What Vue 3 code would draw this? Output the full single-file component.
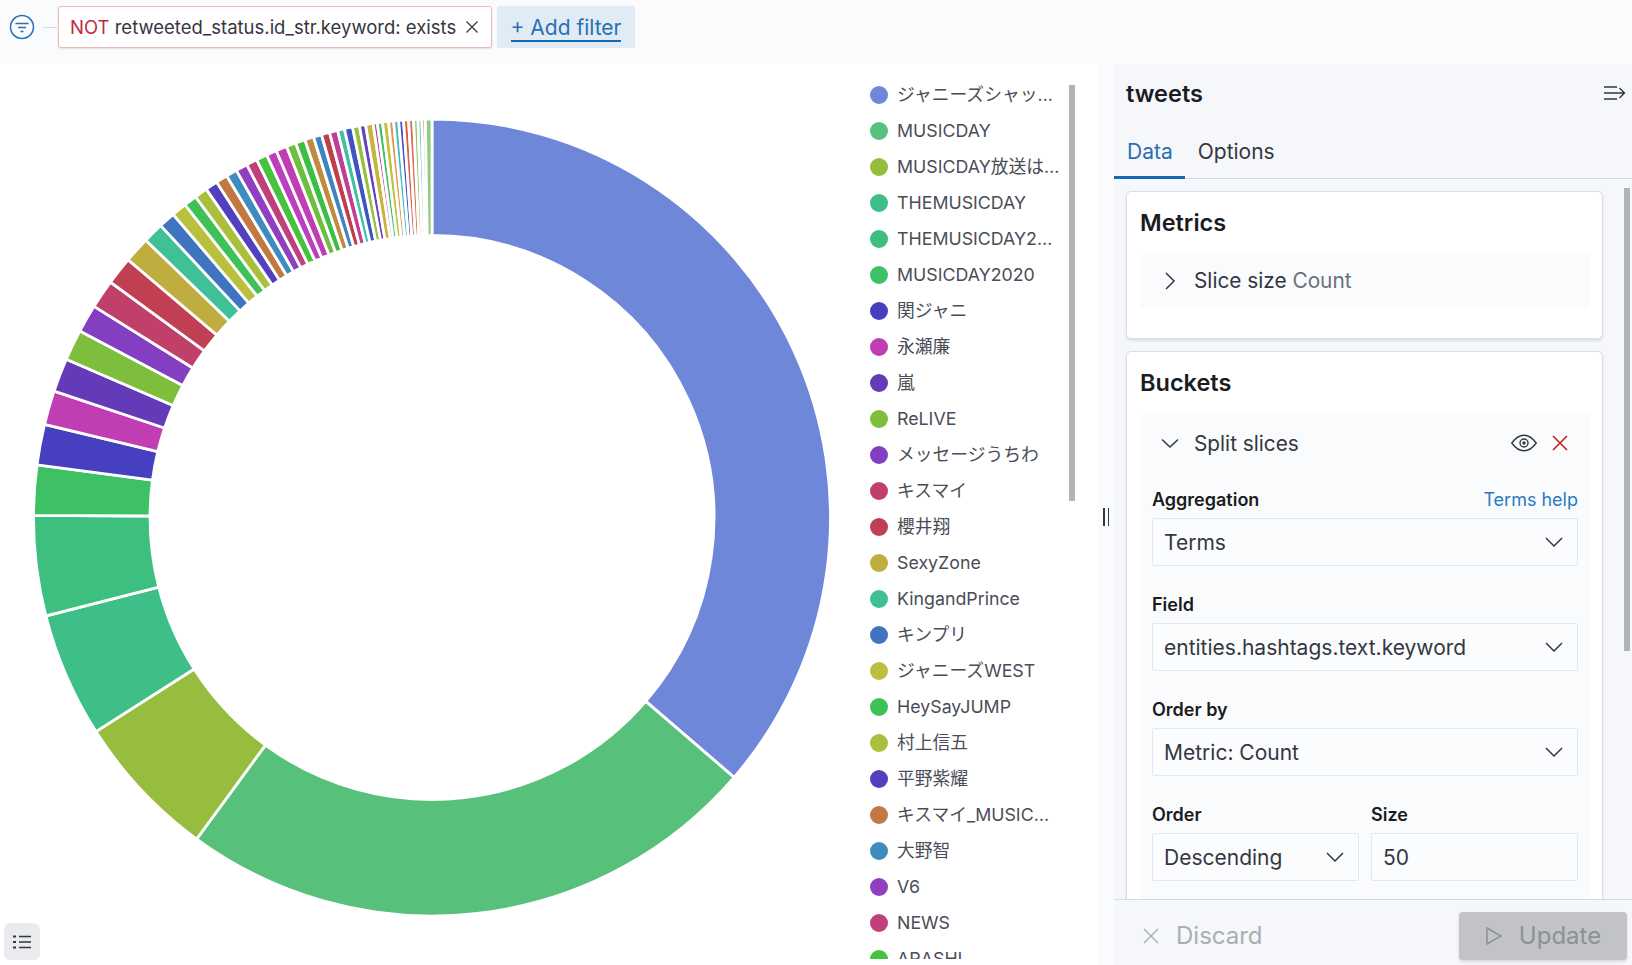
<template>
  <div class="page">
    <header class="filter-bar">
      <svg class="filter-icon" width="26" height="26" viewBox="0 0 26 26" fill="none" stroke="#2a6fb3" stroke-width="1.5">
        <circle cx="13" cy="13" r="11.5" />
        <path d="M6.5 9.5h13M9 13.5h8M11.5 17.5h3" />
      </svg>
      <span class="filter-dash"></span>
      <div class="filter-pill">
        <span class="not">NOT</span>&nbsp;retweeted_status.id_str.keyword: exists
        <svg class="pill-x" width="14" height="14" viewBox="0 0 14 14" fill="none" stroke="#343741" stroke-width="1.2">
          <path d="M1.5 1.5l11 11M12.5 1.5l-11 11" />
        </svg>
      </div>
      <div class="add-filter"><span>+ Add filter</span></div>
    </header>

    <main class="workspace">
      <section class="chart">
        <div class="pie-wrap">
          <svg class="pie" width="866" height="901" viewBox="0 0 866 901">
            <path
              v-for="s in slices"
              :key="s.start"
              :d="s.d"
              :fill="s.color"
              stroke="#fff"
              stroke-width="2.8"
            />
          </svg>
          <button class="legend-toggle">
            <svg width="20" height="18" viewBox="0 0 20 18" fill="none" stroke="#343741">
              <path d="M1 3.5h3M1 9h3M1 14.5h3" stroke-width="2" />
              <path d="M7 3.5h12M7 9h12M7 14.5h12" stroke-width="1.6" />
            </svg>
          </button>
        </div>
        <div class="legend">
          <ul class="legend-list">
            <li v-for="item in legend" :key="item.label" class="legend-item">
              <span class="dot" :style="{ background: item.color }"></span>
              <span class="legend-label">{{ item.label }}</span>
            </li>
          </ul>
          <div class="legend-thumb"></div>
        </div>
      </section>

      <div class="resizer"><span></span><span></span></div>

      <aside class="panel">
        <div class="panel-head">
          <h1>tweets</h1>
          <svg width="22" height="16" viewBox="0 0 22 16" fill="none" stroke="#343741" stroke-width="1.4">
            <path d="M0 2h13M0 8h20M0 14h13M15.5 3l5 5-5 5" />
          </svg>
        </div>
        <nav class="tabs">
          <div class="tab active">Data</div>
          <div class="tab">Options</div>
        </nav>

        <div class="panel-body">
          <section class="card metrics">
            <h2>Metrics</h2>
            <div class="accordion">
              <div class="acc-head">
                <svg class="chev" width="18" height="18" viewBox="0 0 18 18" fill="none" stroke="#343741" stroke-width="1.5">
                  <path d="M5 1l8 8-8 8" />
                </svg>
                <span>Slice size <em>Count</em></span>
              </div>
            </div>
          </section>

          <section class="card buckets">
            <h2>Buckets</h2>
            <div class="accordion open">
              <div class="acc-head">
                <svg class="chev" width="18" height="18" viewBox="0 0 18 18" fill="none" stroke="#343741" stroke-width="1.5">
                  <path d="M1 5.500L9 13l8-7.500" />
                </svg>
                <span>Split slices</span>
                <svg class="eye" width="26" height="18" viewBox="0 0 26 18" fill="none" stroke="#343741" stroke-width="1.4">
                  <path d="M.8 9C4.500 3.800 8.500 1.200 13 1.200S21.500 3.800 25.200 9C21.500 14.200 17.500 16.800 13 16.800S4.500 14.200 .8 9z" />
                  <circle cx="13" cy="9" r="4" />
                  <circle cx="13" cy="9" r="1" fill="#343741" />
                </svg>
                <svg class="del" width="18" height="18" viewBox="0 0 18 18" fill="none" stroke="#bd271e" stroke-width="1.6">
                  <path d="M2 2l14 14M16 2L2 16" />
                </svg>
              </div>

              <div class="field first">
                <div class="label-row"><label>Aggregation</label><a>Terms help</a></div>
                <div class="select">
                  <span>Terms</span>
                  <svg width="18" height="10" viewBox="0 0 18 10" fill="none" stroke="#343741" stroke-width="1.5"><path d="M1 1l8 8 8-8" /></svg>
                </div>
              </div>
              <div class="field">
                <div class="label-row"><label>Field</label></div>
                <div class="select">
                  <span>entities.hashtags.text.keyword</span>
                  <svg width="18" height="10" viewBox="0 0 18 10" fill="none" stroke="#343741" stroke-width="1.5"><path d="M1 1l8 8 8-8" /></svg>
                </div>
              </div>
              <div class="field">
                <div class="label-row"><label>Order by</label></div>
                <div class="select">
                  <span>Metric: Count</span>
                  <svg width="18" height="10" viewBox="0 0 18 10" fill="none" stroke="#343741" stroke-width="1.5"><path d="M1 1l8 8 8-8" /></svg>
                </div>
              </div>
              <div class="field-row">
                <div class="field">
                  <div class="label-row"><label>Order</label></div>
                  <div class="select">
                    <span>Descending</span>
                    <svg width="18" height="10" viewBox="0 0 18 10" fill="none" stroke="#343741" stroke-width="1.5"><path d="M1 1l8 8 8-8" /></svg>
                  </div>
                </div>
                <div class="field">
                  <div class="label-row"><label>Size</label></div>
                  <div class="select"><span>50</span></div>
                </div>
              </div>
            </div>
          </section>
          <div class="panel-thumb"></div>
        </div>

        <footer class="panel-foot">
          <div class="discard">
            <svg width="16" height="16" viewBox="0 0 16 16" fill="none" stroke="#a9adb4" stroke-width="1.4">
              <path d="M1 1l14 14M15 1L1 15" />
            </svg>
            <span>Discard</span>
          </div>
          <div class="update">
            <svg width="18" height="20" viewBox="0 0 18 20" fill="none" stroke="#8d9097" stroke-width="1.5">
              <path d="M2 2l14 8-14 8z" />
            </svg>
            <span>Update</span>
          </div>
        </footer>
      </aside>
    </main>
  </div>
</template>

<script setup>
const CX = 432
const CY = 453.5
const OUTER = 398.5
const INNER = 282

// end angle of each slice, clockwise from 12 o'clock, with its colour
const parts = [
  [130.7, '#6f87d8'], [216.2, '#57c17b'], [237.5, '#96bd3d'], [255.7, '#3fbf88'],
  [270.3, '#3dbf80'], [277.6, '#3ec165'], [283.5, '#463fc0'], [288.5, '#c03db4'],
  [293.4, '#633ab8'], [297.9, '#7dbf3d'], [302, '#843ec1'], [306.2, '#c04069'],
  [310.3, '#c03f52'], [314.1, '#c0ad3f'], [317.1, '#3fc097'], [319.5, '#3f74c0'],
  [321.7, '#b9c03d'], [323.6, '#3ec156'], [325.5, '#aac03d'], [327.3, '#5340bf'],
  [329, '#c27842'], [330.6, '#3f8cc0'], [332.3, '#903fc1'], [333.9, '#c03f7d'],
  [335.5, '#47c23f'], [337, '#bb3fc0'], [338.6, '#c03db4'], [340, '#6ebf3d'],
  [341.4, '#3dbf46'], [342.7, '#c08a3f'], [343.9, '#3f86c0'], [345.1, '#c03f4c'],
  [346.3, '#c03f92'], [347.3, '#3fc0a8'], [348.5, '#3f56c0'], [349.5, '#99c03d'],
  [350.4, '#6a3fc0'], [351.5, '#c4b63f'], [352.1, '#c03f80'], [352.86, '#3fc06a'],
  [353.73, '#c4c03f'], [354.46, '#e0975a'], [355.2, '#3fc0c0'], [355.9, '#4a50c8'],
  [356.63, '#d9603f'], [357.35, '#d97060'], [357.98, '#8fc860'], [358.56, '#70d0d8'],
  [359.04, '#d94f4f'], [360, '#90cc80']
]

function point (radius, deg) {
  const rad = (deg - 90) * Math.PI / 180
  return `${(CX + radius * Math.cos(rad)).toFixed(2)} ${(CY + radius * Math.sin(rad)).toFixed(2)}`
}

let prev = 0
const slices = parts.map(([end, color]) => {
  const start = prev
  prev = end
  const large = end - start > 180 ? 1 : 0
  return {
    start,
    color,
    d: `M${point(INNER, start)}L${point(OUTER, start)}A${OUTER} ${OUTER} 0 ${large} 1 ${point(OUTER, end)}L${point(INNER, end)}A${INNER} ${INNER} 0 ${large} 0 ${point(INNER, start)}Z`
  }
})

const labels = [
  'ジャニーズシャッ…', 'MUSICDAY', 'MUSICDAY放送は…', 'THEMUSICDAY', 'THEMUSICDAY2…',
  'MUSICDAY2020', '関ジャニ', '永瀬廉', '嵐', 'ReLIVE', 'メッセージうちわ', 'キスマイ', '櫻井翔',
  'SexyZone', 'KingandPrince', 'キンプリ', 'ジャニーズWEST', 'HeySayJUMP', '村上信五', '平野紫耀',
  'キスマイ_MUSIC…', '大野智', 'V6', 'NEWS', 'ARASHI'
]
const legend = labels.map((label, i) => ({ label, color: parts[i][1] }))
</script>

<style>
html, body {
  margin: 0;
  background: #fafbfd;
}
</style>

<style scoped>
.page {
  width: 1632px;
  height: 965px;
  display: flex;
  flex-direction: column;
  overflow: hidden;
  background: #fafbfd;
  font-family: Inter, "Noto Sans CJK JP", sans-serif;
  color: #343741;
}
.filter-bar {
  height: 64px;
  flex: none;
  display: flex;
  align-items: flex-start;
  padding: 6px 0 0 9px;
  box-sizing: border-box;
}
.filter-icon {
  margin-top: 8px;
}
.filter-dash {
  width: 14px;
  height: 1px;
  margin: 21px 1px 0 8px;
  background: #d3dae6;
}
.filter-pill {
  width: 434px;
  height: 42px;
  box-sizing: border-box;
  display: flex;
  align-items: center;
  padding: 0 12px 0 11px;
  background: #fff;
  border: 1px solid #f0b7b3;
  border-radius: 3px;
  box-shadow: 0 1px 2px rgba(0, 0, 0, .12);
  font-size: 18.5px;
  white-space: nowrap;
}
.not {
  color: #bd2b3e;
}
.pill-x {
  margin-left: auto;
}
.add-filter {
  margin-left: 5px;
  width: 138px;
  height: 42px;
  padding-top: 3px;
  box-sizing: border-box;
  background: #e0ebf5;
  display: flex;
  align-items: center;
  justify-content: center;
  color: #2a6fb3;
  font-size: 21px;
}
.add-filter span {
  border-bottom: 2px solid #0f69b5;
  line-height: 24px;
}
.workspace {
  flex: 1;
  display: flex;
  min-height: 0;
}
.chart {
  width: 1098px;
  display: flex;
  background: #fff;
}
.pie-wrap {
  width: 866px;
  position: relative;
  flex: none;
}
.pie {
  display: block;
}
.legend-toggle {
  position: absolute;
  left: 4px;
  top: 859px;
  width: 36px;
  height: 37px;
  padding: 0;
  border: 0;
  border-radius: 6px;
  background: #e9ebee;
  display: flex;
  align-items: center;
  justify-content: center;
}
.legend {
  flex: 1;
  position: relative;
  padding: 13px 0 6px 4px;
  min-width: 0;
}
.legend-list {
  list-style: none;
  margin: 0;
  padding: 0;
  height: 882px;
  overflow: hidden;
}
.legend-item {
  height: 36px;
  display: flex;
  align-items: center;
  font-size: 17.8px;
  line-height: 22px;
  color: #4a4d57;
}
.dot {
  width: 18px;
  height: 18px;
  flex: none;
  border-radius: 50%;
  margin-right: 9px;
}
.legend-label {
  white-space: nowrap;
}
.legend-thumb {
  position: absolute;
  left: 203px;
  top: 21px;
  width: 6px;
  height: 416px;
  background: #b0b3b8;
}
.resizer {
  width: 16px;
  flex: none;
  display: flex;
  align-items: center;
  justify-content: center;
  gap: 3px;
  padding-top: 5px;
  box-sizing: border-box;
}
.resizer span {
  width: 1.5px;
  height: 18px;
  background: #343741;
}
.panel {
  flex: 1;
  display: flex;
  flex-direction: column;
  min-width: 0;
  background: #f5f7fa;
}
.panel-head {
  height: 58px;
  flex: none;
  display: flex;
  align-items: center;
  justify-content: space-between;
  padding: 0 6px 0 12px;
  box-sizing: border-box;
}
.panel-head h1 {
  margin: 0;
  font-size: 23.5px;
  font-weight: 600;
  color: #1a1c21;
}
.tabs {
  height: 57px;
  flex: none;
  display: flex;
  box-sizing: border-box;
  border-bottom: 1px solid #d3dae6;
}
.tab {
  padding: 0 12px 0 13px;
  line-height: 60px;
  font-size: 21px;
  color: #343741;
}
.tab.active {
  color: #2a6fb3;
  border-bottom: 3px solid #0f69b5;
  height: 57px;
  box-sizing: border-box;
}
.panel-body {
  flex: 1;
  min-height: 0;
  overflow: hidden;
  position: relative;
  padding: 12px 29px 0 12px;
}
.panel-thumb {
  position: absolute;
  top: 9px;
  left: 510px;
  width: 6px;
  height: 463px;
  background: #b0b3b8;
}
.card {
  background: #fff;
  border: 1px solid #d8dfea;
  border-radius: 5px;
  box-shadow: 0 2px 3px rgba(0, 0, 0, .1);
  padding: 0 12px 0 13px;
  margin-bottom: 13px;
}
.card h2 {
  margin: 0;
  height: 61px;
  line-height: 61px;
  font-size: 23.5px;
  font-weight: 600;
  color: #1a1c21;
}
.metrics {
  height: 148px;
  box-sizing: border-box;
  margin-bottom: 12px;
}
.accordion {
  background: #fafbfd;
  border-radius: 4px;
}
.acc-head {
  height: 55px;
  display: flex;
  align-items: center;
  font-size: 20.8px;
  padding-left: 21px;
}
.acc-head em {
  font-style: normal;
  color: #69707d;
}
.chev {
  width: 18px;
  margin-right: 15px;
  flex: none;
}
.open .acc-head {
  height: 60px;
}
.eye {
  margin-left: auto;
}
.del {
  margin: 0 21px 0 14px;
}
.open {
  padding-bottom: 60px;
}
.field {
  padding: 0 12px;
  margin-top: 19px;
}
.field.first {
  margin-top: 7px;
}
.label-row {
  height: 38px;
  display: flex;
  align-items: center;
  justify-content: space-between;
}
.label-row label {
  font-size: 18px;
  font-weight: 600;
  color: #1a1c21;
}
.label-row a {
  font-size: 18px;
  color: #2a7bc0;
}
.select {
  height: 48px;
  box-sizing: border-box;
  background: #fbfcfd;
  border: 1px solid #e3e7ef;
  border-radius: 2px;
  display: flex;
  align-items: center;
  justify-content: space-between;
  padding: 0 14px 0 11px;
  font-size: 21px;
  color: #343741;
}
.field-row {
  display: grid;
  grid-template-columns: 1fr 1fr;
  gap: 12px;
  padding: 0 12px;
  margin-top: 19px;
}
.field-row .field {
  padding: 0;
  margin: 0;
}
.panel-foot {
  height: 66px;
  flex: none;
  box-sizing: border-box;
  border-top: 1px solid #d3dae6;
  background: #f5f7fa;
  display: flex;
  align-items: center;
  justify-content: space-between;
  padding: 6px 5px 0 29px;
}
.discard {
  display: flex;
  align-items: center;
  gap: 17px;
  font-size: 24px;
  color: #a9adb4;
}
.update {
  width: 168px;
  height: 48px;
  background: #c2c3c6;
  border-radius: 4px;
  display: flex;
  align-items: center;
  justify-content: center;
  gap: 16px;
  font-size: 24px;
  color: #8d9097;
  box-shadow: 0 2px 3px rgba(0, 0, 0, .12);
}
</style>
